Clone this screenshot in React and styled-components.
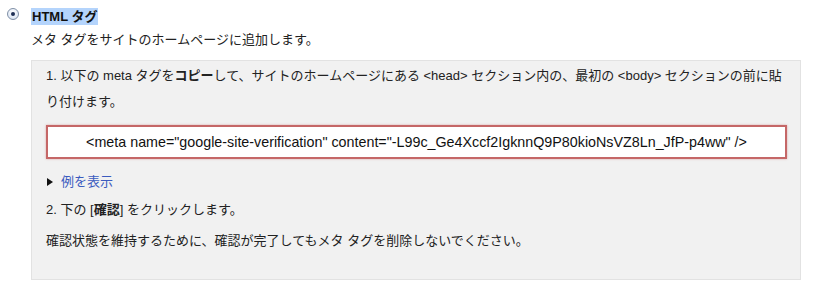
import React from "react";
import styled, { createGlobalStyle } from "styled-components";

const GlobalStyle = createGlobalStyle`
  html, body {
    margin: 0;
    padding: 0;
    background: #ffffff;
  }
  body {
    font-family: "Liberation Sans", "Noto Sans CJK JP", sans-serif;
    color: #222222;
    font-size: 13px;
  }
`;

const Page = styled.div`
  width: 816px;
  height: 293px;
  box-sizing: border-box;
  padding: 7px 15px 0 7px;
  display: flex;
  gap: 12px;
  overflow: hidden;
`;

const Radio = styled.span`
  flex: none;
  width: 12px;
  height: 12px;
  margin-top: 1px;
  border-radius: 50%;
  box-sizing: border-box;
  border: 1px solid #7f8fa6;
  background: radial-gradient(circle at 50% 35%, #ffffff 0%, #dfe8f5 70%, #b8c8e0 100%);
  display: flex;
  align-items: center;
  justify-content: center;
  &::after {
    content: "";
    width: 4px;
    height: 4px;
    border-radius: 50%;
    background: #1d2f55;
  }
`;

const Content = styled.div`
  flex: 1;
  display: flex;
  flex-direction: column;
`;

const Title = styled.div`
  align-self: flex-start;
  font-weight: bold;
  font-size: 13px;
  line-height: 17px;
  padding: 0 1px;
  margin-top: 1px;
  background: #b4d4fc;
  color: #111111;
`;

const Subtitle = styled.div`
  margin-top: 6px;
  line-height: 18px;
  color: #222222;
`;

const Panel = styled.div`
  margin-top: 11px;
  height: 220px;
  box-sizing: border-box;
  background: #f1f1f1;
  border: 1px solid #e2e2e2;
  padding: 2px 12px 0 14px;
  display: flex;
  flex-direction: column;
`;

const Step = styled.p`
  margin: 0;
  line-height: 26px;
  color: #222222;
  b {
    font-weight: bold;
  }
`;

const CodeBox = styled.div`
  margin-top: 10px;
  height: 34px;
  box-sizing: border-box;
  background: #ffffff;
  border: 2px solid #c56767;
  box-shadow: 0 0 2px rgba(200, 90, 90, 0.5);
  display: flex;
  align-items: center;
  justify-content: center;
  font-size: 14.3px;
  color: #111111;
  margin-right: 1px;
`;

const Toggle = styled.div`
  margin-top: 12px;
  display: flex;
  align-items: center;
  gap: 8px;
  color: #3b5bbf;
  line-height: 22px;
  &::before {
    content: "";
    width: 0;
    height: 0;
    border-top: 4px solid transparent;
    border-bottom: 4px solid transparent;
    border-left: 6px solid #111111;
    margin-left: 1px;
  }
`;

const Note = styled.p`
  margin: ${(p) => p.$top || 0}px 0 0;
  line-height: 22px;
  color: #222222;
`;

export default function App() {
  return (
    <>
      <GlobalStyle />
      <Page>
        <Radio />
        <Content>
          <Title>HTML タグ</Title>
          <Subtitle>メタ タグをサイトのホームページに追加します。</Subtitle>
          <Panel>
            <Step>
              1. 以下の meta タグを<b>コピー</b>して、サイトのホームページにある &lt;head&gt; セクション内の、最初の &lt;body&gt; セクションの前に貼り付けます。
            </Step>
            <CodeBox>
              &lt;meta name="google-site-verification" content="-L99c_Ge4Xccf2IgknnQ9P80kioNsVZ8Ln_JfP-p4ww" /&gt;
            </CodeBox>
            <Toggle>例を表示</Toggle>
            <Note $top={6}>
              2. 下の [<b>確認</b>] をクリックします。
            </Note>
            <Note $top={9}>確認状態を維持するために、確認が完了してもメタ タグを削除しないでください。</Note>
          </Panel>
        </Content>
      </Page>
    </>
  );
}
